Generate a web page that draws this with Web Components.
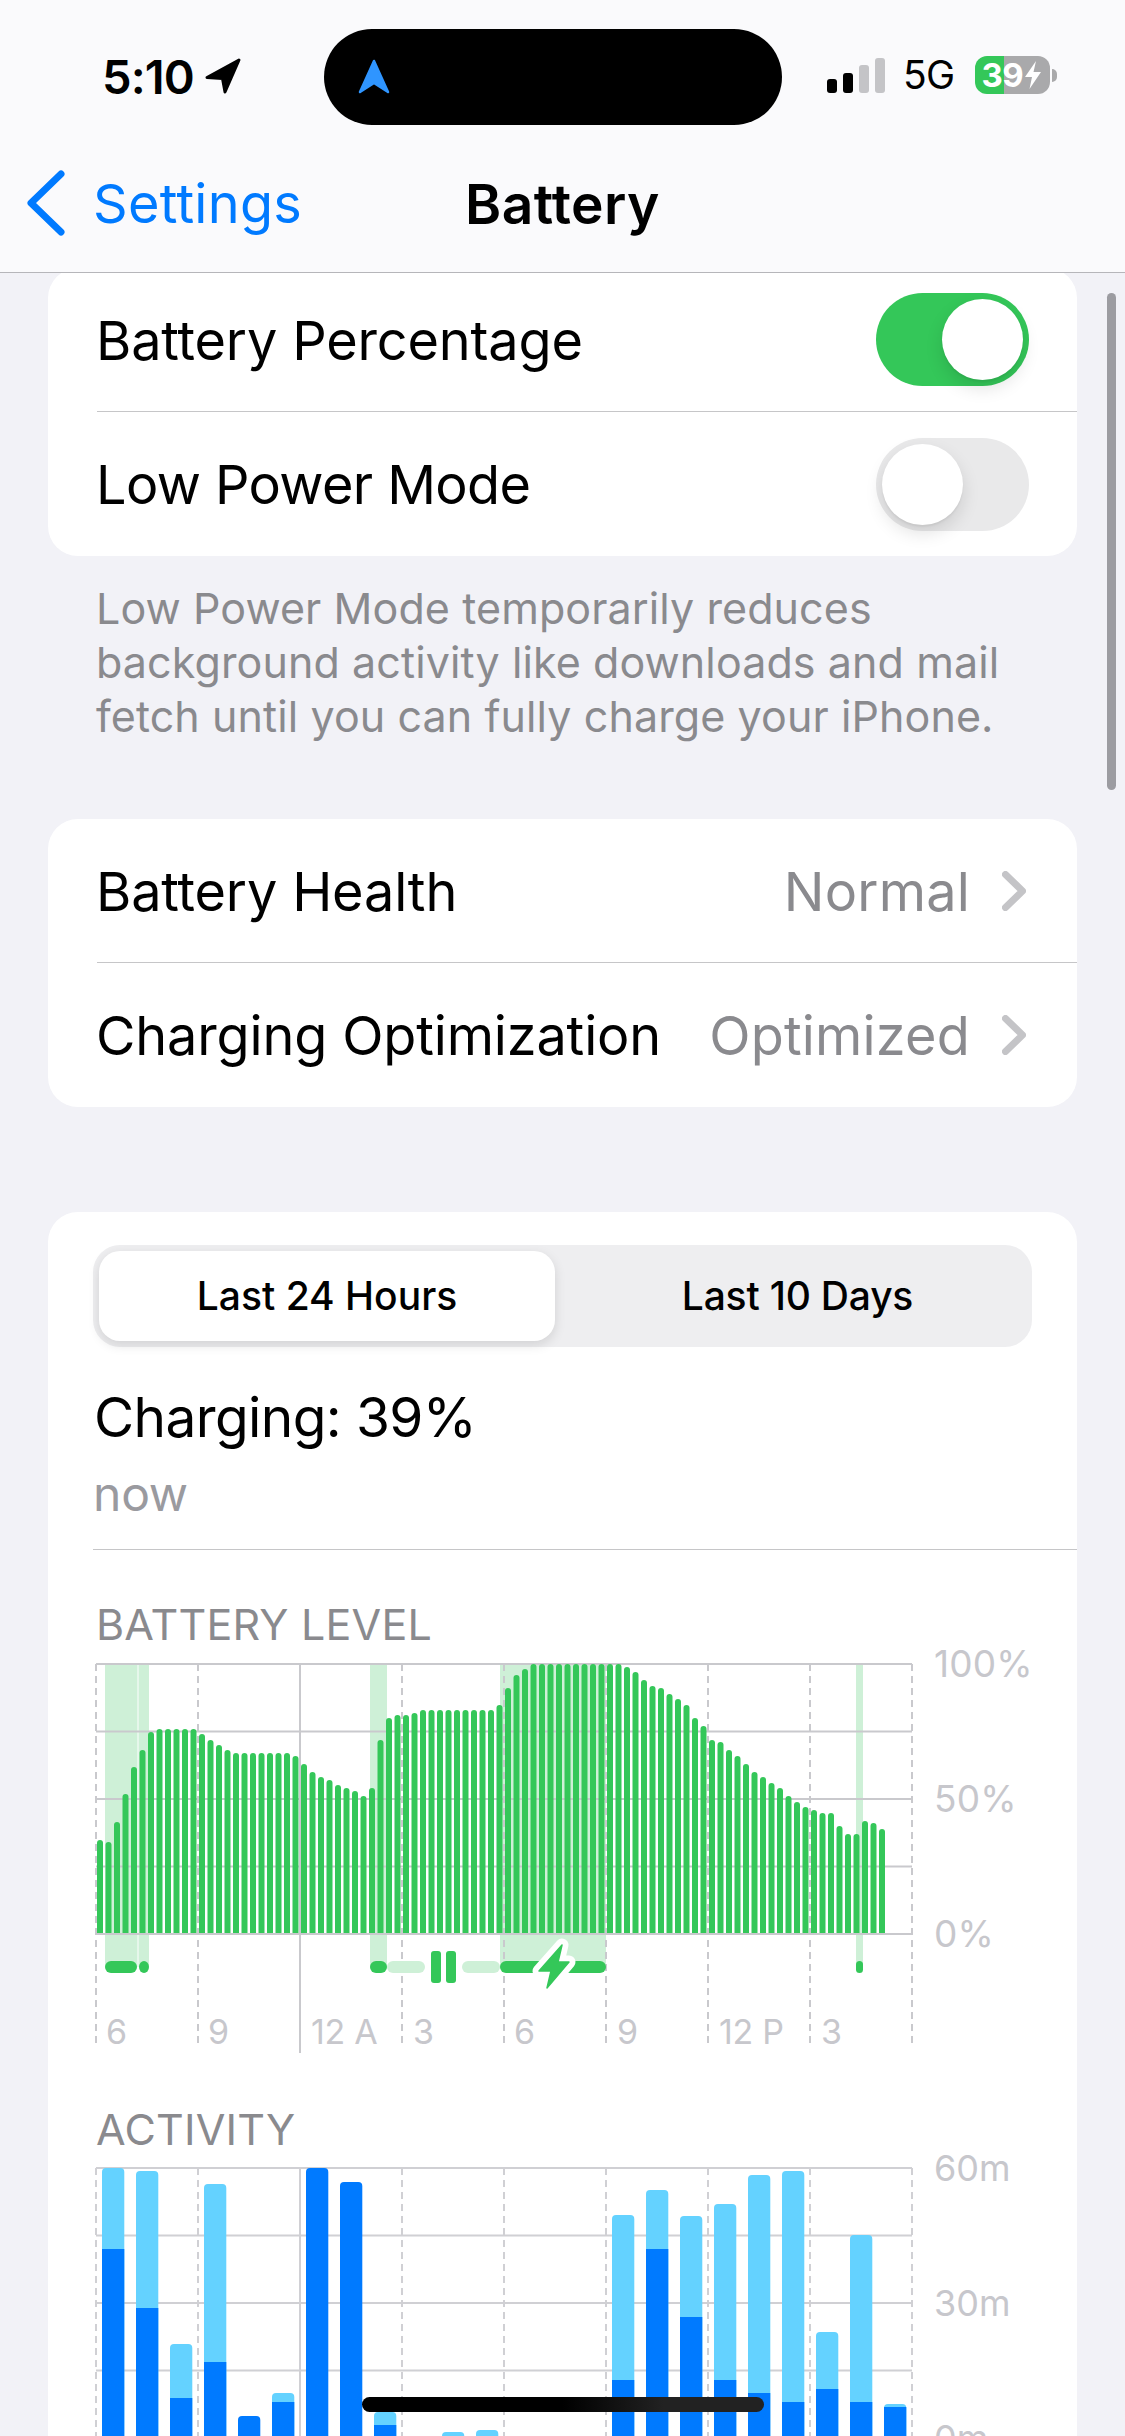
<!DOCTYPE html>
<html lang="en">
<head>
<meta charset="utf-8">
<title>Battery</title>
<style>
  html, body { margin: 0; padding: 0; }
  body {
    width: 1125px;
    height: 2436px;
    overflow: hidden;
    position: relative;
    background: #f2f2f7;
    font-family: Inter, "Noto Sans", sans-serif;
    color: #000;
  }
  .scroll { display: block; margin-top: -5px; }
  footer-note { margin-bottom: 76px; }
  settings-card.spaced { margin-bottom: 105px; }
</style>
</head>
<body>
<status-bar></status-bar>
<nav-bar back="Settings" title="Battery"></nav-bar>

<main class="scroll">
  <settings-card>
    <settings-row label="Battery Percentage"><switch-toggle on></switch-toggle></settings-row>
    <settings-row label="Low Power Mode" style="letter-spacing:-.6px" last><switch-toggle></switch-toggle></settings-row>
  </settings-card>
  <footer-note>Low Power Mode temporarily reduces<br>background activity like downloads and mail<br>fetch until you can fully charge your iPhone.</footer-note>
  <settings-card class="spaced">
    <settings-row label="Battery Health" value="Normal"></settings-row>
    <settings-row label="Charging Optimization" value="Optimized" last></settings-row>
  </settings-card>
  <usage-panel></usage-panel>
</main>

<scroll-indicator></scroll-indicator>
<home-indicator></home-indicator>

<script>
const FONT = 'Inter, "Noto Sans", sans-serif';

function shell(css, html) {
  const t = document.createElement('template');
  t.innerHTML = `<style>${css}</style>${html}`;
  return t;
}

class BaseElement extends HTMLElement {
  constructor() {
    super();
    this.attachShadow({ mode: 'open' });
    this.shadowRoot.appendChild(this.constructor.template.content.cloneNode(true));
  }
}

class StatusBar extends BaseElement {
  static template = shell(`
    :host { display: flex; align-items: flex-start; height: 146px; padding-top: 29px; box-sizing: border-box; background: #fafafc; }
    .time { display: flex; align-items: center; gap: 10px; width: 324px; height: 96px; padding-left: 102px; box-sizing: border-box; font: 600 47px/96px ${FONT}; letter-spacing: -0.9px; }
    .time svg { flex: none; margin-top: -3px; }
    .island { width: 458px; height: 96px; border-radius: 48px; background: #000; display: flex; align-items: center; padding-left: 33px; box-sizing: border-box; }
    .right { display: flex; align-items: center; height: 96px; padding-left: 45px; margin-top: -2px; }
    .signal { display: flex; align-items: flex-end; gap: 6px; height: 35px; }
    .signal i { display: block; width: 10px; border-radius: 3px; background: #000; }
    .signal i:nth-child(n+3) { background: #c4c4c7; }
    .net { font: 400 39px/96px ${FONT}; letter-spacing: -0.6px; margin: 0 20px 0 18px; }
    .battery { display: flex; align-items: center; justify-content: flex-start; width: 75px; height: 38px; padding-left: 7px; box-sizing: border-box; border-radius: 12px; background: linear-gradient(90deg, #34c759 0 29px, #a9a9ab 29px); color: #fff; font: 700 33px/38px ${FONT}; letter-spacing: -0.6px; }
    .nub { width: 5px; height: 13px; margin-left: 2px; border-radius: 0 6px 6px 0; background: #a9a9ab; }
  `, `
    <div class="time">5:10
      <svg width="37" height="36" viewBox="0 0 37 36"><path d="M35 2 3 19.5 18.5 20.5 21 34Z" fill="#000" stroke="#000" stroke-width="3" stroke-linejoin="round"/></svg>
    </div>
    <div class="island">
      <svg width="34" height="36" viewBox="0 0 34 36"><path d="M17 2 31 33 17 24 3 33Z" fill="#2f95ff" stroke="#2f95ff" stroke-width="2.5" stroke-linejoin="round"/></svg>
    </div>
    <div class="right">
      <div class="signal"><i style="height:14px"></i><i style="height:20px"></i><i style="height:28px"></i><i style="height:35px"></i></div>
      <span class="net">5G</span>
      <div class="battery">39<svg width="18" height="30" viewBox="0 0 18 30" style="flex:none;margin-left:1px"><path d="M12 1 1 17H8L5.5 29 17 12H9.5Z" fill="#fff"/></svg></div>
      <div class="nub"></div>
    </div>
  `);
}

class NavBar extends BaseElement {
  static template = shell(`
    :host { display: block; position: relative; z-index: 2; height: 127px; box-sizing: border-box; background: #fafafc; border-bottom: 1px solid #b6b6ba; font: 400 54px/1 ${FONT}; }
    .bar { position: relative; display: flex; align-items: center; justify-content: center; height: 116px; }
    .back { position: absolute; left: 26px; top: 0; height: 116px; display: flex; align-items: center; gap: 25px; color: #007aff; letter-spacing: 0.3px; }
    .back svg { margin-top: -2px; }
    .title { font-size: 55px; font-weight: 600; letter-spacing: 0.4px; }
  `, `
    <div class="bar">
      <div class="back">
        <svg width="42" height="66" viewBox="0 0 42 66"><path d="M35 4 5 33 35 62" fill="none" stroke="#007aff" stroke-width="7" stroke-linecap="round" stroke-linejoin="round"/></svg>
        <span id="back"></span>
      </div>
      <span class="title" id="title"></span>
    </div>
  `);
  connectedCallback() {
    this.shadowRoot.getElementById('back').textContent = this.getAttribute('back');
    this.shadowRoot.getElementById('title').textContent = this.getAttribute('title');
  }
}

class SettingsCard extends BaseElement {
  static template = shell(`
    :host { display: block; margin: 0 48px; background: #fff; border-radius: 30px; overflow: hidden; }
  `, `<slot></slot>`);
}

class SettingsRow extends BaseElement {
  static template = shell(`
    :host { display: flex; align-items: center; height: 144px; margin-left: 49px; padding-right: 48px; box-sizing: border-box; border-bottom: 1px solid #c6c6c8; font: 400 54px/1 ${FONT}; letter-spacing: -0.15px; color: #000; }
    :host([last]) { border-bottom: 0; }
    .label { flex: 1; margin: 2px 0 0 -1px; white-space: nowrap; }
    .value { color: #8a8a8e; margin: 2px 32px 0 0; letter-spacing: 0.2px; }
    svg { display: block; margin-right: 3px; }
  `, `
    <span class="label" id="label"></span>
    <slot></slot>
    <span class="value" id="value"></span>
    <svg id="chev" width="24" height="40" viewBox="0 0 24 40"><path d="M3.5 3.5 20.5 20 3.5 36.5" fill="none" stroke="#c4c4c7" stroke-width="7" stroke-linecap="round" stroke-linejoin="round"/></svg>
  `);
  connectedCallback() {
    const root = this.shadowRoot;
    root.getElementById('label').textContent = this.getAttribute('label');
    const value = this.getAttribute('value');
    if (value) {
      root.getElementById('value').textContent = value;
    } else {
      root.getElementById('value').remove();
      root.getElementById('chev').remove();
    }
  }
}

class SwitchToggle extends BaseElement {
  static template = shell(`
    :host { display: block; width: 153px; height: 93px; border-radius: 47px; background: #e9e9ea; position: relative; }
    :host([on]) { background: #34c759; }
    .knob { position: absolute; top: 6px; left: 6px; width: 81px; height: 81px; border-radius: 50%; background: #fff; box-shadow: 0 8px 18px rgba(0,0,0,.12), 0 2px 2px rgba(0,0,0,.05); }
    :host([on]) .knob { left: 66px; }
  `, `<div class="knob"></div>`);
}

class FooterNote extends BaseElement {
  static template = shell(`
    :host { display: block; padding: 25px 80px 0 96px; font: 400 43px/54px ${FONT}; letter-spacing: 0.1px; color: #8a8a8e; white-space: nowrap; }
  `, `<slot></slot>`);
}

class SegmentedControl extends BaseElement {
  static template = shell(`
    :host { display: grid; grid-template-columns: 468px 1fr; width: 939px; height: 102px; padding: 6px; box-sizing: border-box; border-radius: 27px; background: #eeeef0; font: 500 39px/90px ${FONT}; text-align: center; }
    .on { border-radius: 21px; width: 456px; background: #fff; box-shadow: 0 4px 12px rgba(0,0,0,.12); }
    .off { letter-spacing: -0.2px; padding-left: 2px; }
  `, `<div class="on">Last 24 Hours</div><div class="off">Last 10 Days</div>`);
}

const NS = 'http://www.w3.org/2000/svg';
function el(parent, tag, attrs, text) {
  const node = document.createElementNS(NS, tag);
  for (const k in attrs) node.setAttribute(k, attrs[k]);
  if (text) node.textContent = text;
  parent.appendChild(node);
  return node;
}

// chart grid shared by the two charts. verticals sit at x0 + 102 * i
function drawGrid(svg, top, base, gridBottom, color) {
  const step = (base - top) / 4;
  for (let i = 0; i <= 4; i++) {
    const y = top + step * i;
    el(svg, 'line', { x1: 96, x2: 912, y1: y, y2: y, stroke: color, 'stroke-width': 2 });
  }
  for (let i = 0; i <= 8; i++) {
    const x = 96 + 102 * i;
    const solid = i === 2;
    el(svg, 'line', {
      x1: x, x2: x, y1: top, y2: solid ? gridBottom + 6 : gridBottom,
      stroke: color, 'stroke-width': 2,
      'stroke-dasharray': solid ? 'none' : '7 5'
    });
  }
}

// bar tops as read off the reference, in px below the 100% line
const LEVELS = [
  176, 178, 158, 130, 103, 86, 68, 65, 65, 65, 65, 65, 70, 76, 81, 86, 89, 89, 89, 89, 89, 89, 89, 92,
  100, 108, 113, 116, 121, 124, 127, 132, 124, 76, 54, 51, 51, 49, 46, 46, 46, 46, 46, 46, 46, 46, 46, 41,
  24, 11, 5, 0, 0, 0, 0, 0, 0, 0, 0, 0, 0, 0, 3, 8, 16, 22, 24, 30, 35, 41, 54, 62, 76, 78, 86, 92, 100,
  108, 113, 119, 124, 132, 138, 143, 146, 149, 149, 162, 170, 170, 157, 159, 165
];

class BatteryChart extends BaseElement {
  static template = shell(`
    :host { display: block; height: 416px; }
    svg { display: block; overflow: visible; }
    text { font: 400 34px ${FONT}; fill: #c7c7cc; letter-spacing: -0.3px; }
    text.axis { font-size: 37px; letter-spacing: 0.2px; }
  `, `<svg id="c" width="1077" height="416" viewBox="0 1648 1077 416"></svg>`);
  connectedCallback() {
    const svg = this.shadowRoot.getElementById('c');
    const top = 1664, base = 1934;
    const band = '#cef0d7', green = '#34c759';
    for (const [a, b] of [[105, 137.5], [138.5, 149], [370, 387], [500, 606], [856, 863]]) {
      el(svg, 'rect', { x: a, y: top, width: b - a, height: 1967 - top, fill: band });
    }
    drawGrid(svg, top, base, 2047, '#c9c9cd');
    LEVELS.forEach((drop, i) => {
      const x = 97 + 8.5 * i, t = top + drop;
      el(svg, 'path', { d: `M${x} ${base}V${t + 3}A3 3 0 0 1 ${x + 6} ${t + 3}V${base}Z`, fill: green });
    });
    el(svg, 'line', { x1: 96, x2: 912, y1: base, y2: base, stroke: '#c9c9cd', 'stroke-width': 2 });
    for (const [a, b, c] of [[105, 137, green], [139, 149, green], [370, 387, green], [387, 425, band], [462, 500, band], [500, 606, green], [856, 863, green]]) {
      el(svg, 'rect', { x: a, y: 1961, width: b - a, height: 12, rx: b - a < 10 ? 3.5 : 6, fill: c });
    }
    el(svg, 'rect', { x: 431, y: 1951, width: 10, height: 32, rx: 3, fill: green });
    el(svg, 'rect', { x: 446, y: 1951, width: 10, height: 32, rx: 3, fill: green });
    const bolt = 'M562 1945 539 1971H551L547 1988 569 1962H558Z';
    el(svg, 'path', { d: bolt, fill: '#fff', stroke: '#fff', 'stroke-width': 13, 'stroke-linejoin': 'round' });
    el(svg, 'path', { d: bolt, fill: green, stroke: green, 'stroke-width': 1.5, 'stroke-linejoin': 'round' });
    for (const [x, s] of [[106, '6'], [208, '9'], [311, '12 A'], [413, '3'], [514, '6'], [617, '9'], [719, '12 P'], [821, '3']]) {
      el(svg, 'text', { x, y: 2044 }, s);
    }
    for (const [y, s] of [[1677, '100%'], [1812, '50%'], [1947, '0%']]) {
      el(svg, 'text', { x: 934, y, class: 'axis' }, s);
    }
  }
}

// [light top, dark top], px below the 60m line. null means that part is missing
const ACTIVITY = [
  [0, 81], [3, 140], [176, 230], [16, 194], [null, 248], [225, 234], [null, 0], [null, 14],
  [244, 257], null, [264, null], [262, null], null, null, null, [47, 212],
  [22, 81], [48, 149], [36, 212], [7, 225], [3, 234], [164, 221], [67, 234], [236, 239]
];

class ActivityChart extends BaseElement {
  static template = shell(`
    :host { display: block; height: 320px; }
    svg { display: block; overflow: visible; }
    text { font: 400 36px ${FONT}; fill: #c7c7cc; }
  `, `<svg id="c" width="1077" height="320" viewBox="0 2153 1077 320"></svg>`);
  connectedCallback() {
    const svg = this.shadowRoot.getElementById('c');
    const top = 2168, base = 2438;
    drawGrid(svg, top, base, base, '#d0d0d4');
    ACTIVITY.forEach((bar, i) => {
      if (!bar) return;
      const x = 102 + 34 * i, w = 22.3;
      const [light, dark] = bar;
      if (light !== null) {
        el(svg, 'rect', { x, y: top + light, width: w, height: base - top - light + 6, rx: 4, fill: '#64d2ff' });
      }
      if (dark !== null) {
        const radius = light === null ? 4 : 0;
        el(svg, 'rect', { x, y: top + dark, width: w, height: base - top - dark + 6, rx: radius, fill: '#007aff' });
      }
    });
    for (const [y, s] of [[2181, '60m'], [2316, '30m'], [2451, '0m']]) {
      el(svg, 'text', { x: 934, y }, s);
    }
  }
}

class UsagePanel extends BaseElement {
  static template = shell(`
    :host { display: block; margin-left: 48px; margin-right: 48px; height: 1300px; padding-top: 33px; box-sizing: border-box; background: #fff; border-radius: 30px 30px 0 0; }
    segmented-control { margin-left: 45px; }
    .head { margin-left: 46px; font: 400 55px/68px ${FONT}; letter-spacing: -0.6px; padding-top: 36px; }
    .sub { margin: 13px 0 0 45px; font: 400 48px/60px ${FONT}; color: #9a9a9f; letter-spacing: -0.2px; }
    .rule { height: 1px; margin: 25px 0 0 45px; background: #c6c6c8; }
    .title { margin-left: 48px; font: 400 43px/48px ${FONT}; letter-spacing: 0.2px; color: #8a8a8e; padding-top: 50px; }
    .chart { margin-left: -48px; }
    .title.second { padding-top: 41px; }
  `, `
    <segmented-control></segmented-control>
    <div class="head">Charging: 39%</div>
    <div class="sub">now</div>
    <div class="rule"></div>
    <div class="title">BATTERY LEVEL</div>
    <battery-chart class="chart"></battery-chart>
    <div class="title second">ACTIVITY</div>
    <activity-chart class="chart"></activity-chart>
  `);
}

class ScrollIndicator extends BaseElement {
  static template = shell(`
    :host { position: absolute; left: 1107px; top: 293px; width: 9px; height: 497px; border-radius: 5px; background: #9c9ca1; z-index: 3; }
  `, ``);
}

class HomeIndicator extends BaseElement {
  static template = shell(`
    :host { position: absolute; left: 362px; top: 2397px; width: 402px; height: 15px; border-radius: 8px; background: linear-gradient(90deg, #000 50%, #222 75%); z-index: 3; }
  `, ``);
}

customElements.define('status-bar', StatusBar);
customElements.define('nav-bar', NavBar);
customElements.define('settings-card', SettingsCard);
customElements.define('settings-row', SettingsRow);
customElements.define('switch-toggle', SwitchToggle);
customElements.define('footer-note', FooterNote);
customElements.define('segmented-control', SegmentedControl);
customElements.define('battery-chart', BatteryChart);
customElements.define('activity-chart', ActivityChart);
customElements.define('usage-panel', UsagePanel);
customElements.define('scroll-indicator', ScrollIndicator);
customElements.define('home-indicator', HomeIndicator);
</script>
</body>
</html>
